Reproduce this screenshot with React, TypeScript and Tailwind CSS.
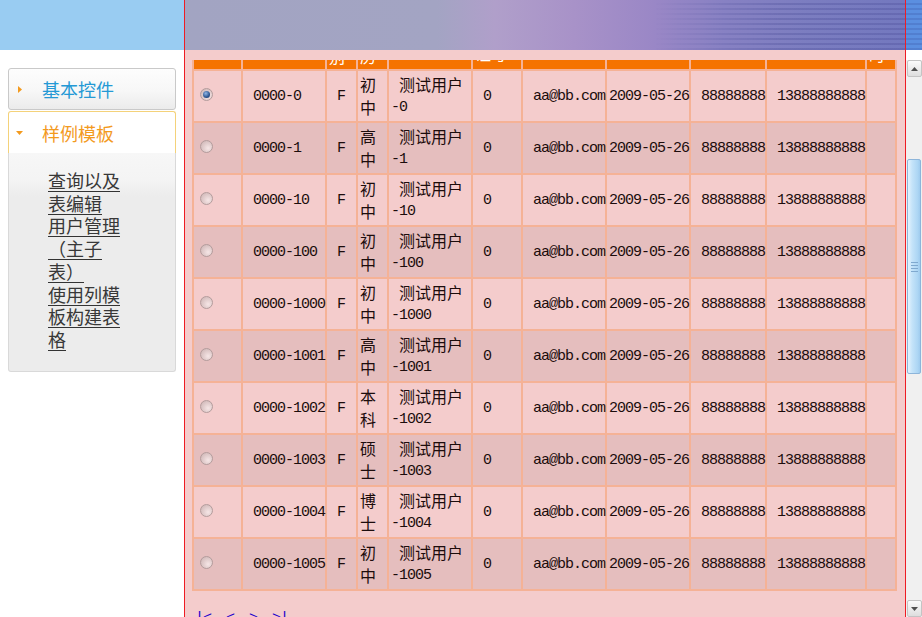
import { useLayoutEffect, useRef } from "react";

type Row = { id: string; edu: [string, string]; suffix: string };

const rows: Row[] = [
  { id: "0000-0", edu: ["初", "中"], suffix: "-0" },
  { id: "0000-1", edu: ["高", "中"], suffix: "-1" },
  { id: "0000-10", edu: ["初", "中"], suffix: "-10" },
  { id: "0000-100", edu: ["初", "中"], suffix: "-100" },
  { id: "0000-1000", edu: ["初", "中"], suffix: "-1000" },
  { id: "0000-1001", edu: ["高", "中"], suffix: "-1001" },
  { id: "0000-1002", edu: ["本", "科"], suffix: "-1002" },
  { id: "0000-1003", edu: ["硕", "士"], suffix: "-1003" },
  { id: "0000-1004", edu: ["博", "士"], suffix: "-1004" },
  { id: "0000-1005", edu: ["初", "中"], suffix: "-1005" },
];

const colWidths = ["w-[47px]", "w-[82px]", "w-[29px]", "w-[29px]", "w-[82px]", "w-[48px]", "w-[82px]", "w-[82px]", "w-[74px]", "w-[98px]", "w-[28px]"];

const cjk = "font-['Noto_Sans_CJK_SC',sans-serif] text-[16px] tracking-normal";

// header cells: only the last few pixels show, the rest is scrolled away
const heads: { lines: string[]; pb: string }[] = [
  { lines: [], pb: "pb-[16px]" },
  { lines: ["用户ID"], pb: "pb-[16px]" },
  { lines: ["性", "别"], pb: "pb-[3px]" },
  { lines: ["学", "历"], pb: "pb-[3px]" },
  { lines: ["用户名"], pb: "pb-[16px]" },
  { lines: ["身份", "证号"], pb: "pb-[6px]" },
  { lines: ["邮件"], pb: "pb-[16px]" },
  { lines: ["生日"], pb: "pb-[16px]" },
  { lines: ["电话"], pb: "pb-[16px]" },
  { lines: ["手机"], pb: "pb-[16px]" },
  { lines: ["注", "时"], pb: "pb-[5px]" },
];

function Radio({ checked }: { checked?: boolean }) {
  return (
    <span className="inline-flex h-[13px] w-[13px] items-center justify-center rounded-full border border-[#b39c9c] bg-[radial-gradient(circle_at_65%_65%,#f6e6e6,#d7c0c0_70%,#c9b0b0)] align-middle">
      {checked ? (
        <span className="h-[7px] w-[7px] rounded-full bg-[radial-gradient(circle_at_40%_35%,#8fb6e6,#2d5590_60%,#17325e)]" />
      ) : null}
    </span>
  );
}

function ScrollArrow({ up }: { up?: boolean }) {
  return (
    <div className="ml-px flex h-[17px] w-[15px] items-center justify-center rounded-[2px] border border-[#c4c4c4] bg-gradient-to-b from-[#fbfbfb] to-[#dedede]">
      <svg width="7" height="4" viewBox="0 0 7 4">
        {up ? <path d="M0 4 L3.5 0 L7 4 Z" fill="#505050" /> : <path d="M0 0 L3.5 4 L7 0 Z" fill="#505050" />}
      </svg>
    </div>
  );
}

export default function App() {
  const viewport = useRef<HTMLDivElement>(null);

  useLayoutEffect(() => {
    if (viewport.current) viewport.current.scrollTop = 43;
  }, []);

  return (
    <div className="flex h-[617px] w-[922px] overflow-hidden bg-white font-['Noto_Sans_CJK_SC',sans-serif]">
      {/* left menu frame */}
      <aside className="flex w-[184px] shrink-0 flex-col">
        <div className="h-[50px] bg-[#99ccf2]" />
        <div className="ml-[8px] mt-[18px] w-[168px]">
          <div className="flex h-[42px] items-center rounded-[3px] border border-[#c9c9c9] bg-[linear-gradient(to_bottom,#fdfdfd,#f7f7f7_55%,#ebebeb)]">
            <svg className="ml-[9px]" width="4" height="7" viewBox="0 0 4 7">
              <path d="M0 0 L4 3.5 L0 7 Z" fill="#f39a1e" />
            </svg>
            <span className="ml-[20px] text-[18px] leading-none text-[#2499d5]">基本控件</span>
          </div>
          <div className="mt-[1px]">
            <div className="flex h-[42px] items-center rounded-t-[3px] border border-b-0 border-[#f4d27a] bg-white">
              <svg className="ml-[7px]" width="7" height="4" viewBox="0 0 7 4">
                <path d="M0 0 L7 0 L3.5 4 Z" fill="#f39a1e" />
              </svg>
              <span className="ml-[19px] text-[18px] leading-none text-[#f39a1e]">样例模板</span>
            </div>
            <div className="h-[219px] rounded-b-[3px] border border-t-0 border-[#d9d9d9] bg-[linear-gradient(to_bottom,#f7f7f7,#f4f4f4_12%,#ececec_20%,#ececec)] pl-[39px] pt-[16px]">
              <div className="w-[76px] text-[18px] leading-[22.7px] text-[#383838]">
                <a className="block underline decoration-[#333] underline-offset-[3px]" href="#">查询以及表编辑</a>
                <a className="block underline decoration-[#333] underline-offset-[3px]" href="#">用户管理（主子表）</a>
                <a className="block underline decoration-[#333] underline-offset-[3px]" href="#">使用列模板构建表格</a>
              </div>
            </div>
          </div>
        </div>
      </aside>

      <div className="w-px shrink-0 bg-[#ee1c24]" />

      {/* main frame */}
      <main className="flex w-[720px] shrink-0 flex-col">
        <div className="flex h-[50px] bg-[linear-gradient(to_right,#a2a4c2_0%,#a3a4c3_35%,#b09fca_43%,#a892c8_54%,#9a87c6_65%,#8781c3_75%,#7b7dc0_87%,#7378bf_100%)]">
          <div className="ml-auto h-full w-[250px] bg-[repeating-linear-gradient(to_bottom,transparent_0px,transparent_3px,rgba(72,74,150,0.3)_3px,rgba(72,74,150,0.3)_5px)] [mask-image:linear-gradient(to_right,transparent,black_50%)]" />
        </div>
        <div className="h-[10px] bg-[#f4cccc]" />
        <div ref={viewport} className="flex-1 overflow-hidden bg-[#f4cccc]">
          <table className="ml-[7px] w-[705px] table-fixed border-separate border-spacing-[2px] bg-[#f5b296] font-['Liberation_Mono','Noto_Sans_CJK_SC',monospace] text-[15px] tracking-[-1px] text-[#1c0c0c]">
            <colgroup>
              {colWidths.map((w, i) => (
                <col key={i} className={w} />
              ))}
            </colgroup>
            <thead>
              <tr className="h-[50px] bg-[#f57300] text-white">
                {heads.map((h, i) => (
                  <th key={i} className={`overflow-hidden p-[2px] text-left align-bottom font-normal ${h.pb} ${cjk}`}>
                    {h.lines.map((l) => (
                      <div key={l} className="h-[20px] whitespace-nowrap leading-[20px]">
                        {l}
                      </div>
                    ))}
                  </th>
                ))}
              </tr>
            </thead>
            <tbody>
              {rows.map((r, i) => (
                <tr key={r.id} className={`h-[50px] ${i % 2 === 0 ? "bg-[#f4cccc]" : "bg-[#e5bebe]"}`}>
                  <td className="p-[2px] pl-[6px] align-middle">
                    <Radio checked={i === 0} />
                  </td>
                  <td className="whitespace-nowrap p-[2px] leading-[23px]">{"\u00a0" + r.id}</td>
                  <td className="whitespace-nowrap p-[2px] leading-[23px]">{"\u00a0F"}</td>
                  <td className={`p-[2px] ${cjk}`}>
                    <div className="h-[23px] leading-[23px]">{r.edu[0]}</div>
                    <div className="h-[23px] leading-[23px]">{r.edu[1]}</div>
                  </td>
                  <td className="p-[2px]">
                    <div className="h-[23px] whitespace-nowrap leading-[23px]">
                      {"\u00a0"}
                      <span className={cjk}>测试用户</span>
                    </div>
                    <div className="h-[23px] leading-[23px]">{r.suffix}</div>
                  </td>
                  <td className="whitespace-nowrap p-[2px] leading-[23px]">{"\u00a00"}</td>
                  <td className="whitespace-nowrap p-[2px] leading-[23px]">{"\u00a0aa@bb.com"}</td>
                  <td className="whitespace-nowrap p-[2px] leading-[23px]">2009-05-26</td>
                  <td className="whitespace-nowrap p-[2px] leading-[23px]">{"\u00a088888888"}</td>
                  <td className="whitespace-nowrap p-[2px] leading-[23px]">{"\u00a013888888888"}</td>
                  <td className="p-[2px]" />
                </tr>
              ))}
            </tbody>
          </table>
          <div className="ml-[10px] mt-[18px] flex gap-[15px] pb-[300px] font-['Liberation_Mono',monospace] text-[15px] leading-[20px] tracking-[-1px] text-[#2200cc]">
            <a href="#">|&lt;</a>
            <a href="#">&lt;</a>
            <a href="#">&gt;</a>
            <a href="#">&gt;|</a>
          </div>
        </div>
      </main>

      <div className="w-px shrink-0 bg-[#ee1c24]" />

      {/* scrollbar */}
      <div className="flex w-[16px] shrink-0 flex-col">
        <div className="h-[50px] bg-[#5b8fe0] bg-[repeating-linear-gradient(to_bottom,transparent_0px,transparent_3px,rgba(60,90,170,0.3)_3px,rgba(60,90,170,0.3)_5px)]" />
        <div className="h-[10px] bg-white" />
        <div className="flex flex-1 flex-col bg-[#f0f0f0]">
          <ScrollArrow up />
          <div className="h-[82px]" />
          <div className="ml-px flex h-[215px] w-[14px] flex-col items-center justify-center gap-[2px] rounded-[2px] border border-[#8db5da] bg-[linear-gradient(to_right,#e3f2fd,#c4e3f9_35%,#add6f4_80%,#9fcbee)]">
            <span className="h-px w-[7px] bg-[#7fa9cf]" />
            <span className="h-px w-[7px] bg-[#7fa9cf]" />
            <span className="h-px w-[7px] bg-[#7fa9cf]" />
            <span className="h-px w-[7px] bg-[#7fa9cf]" />
          </div>
          <div className="flex-1" />
          <ScrollArrow />
        </div>
      </div>
    </div>
  );
}
